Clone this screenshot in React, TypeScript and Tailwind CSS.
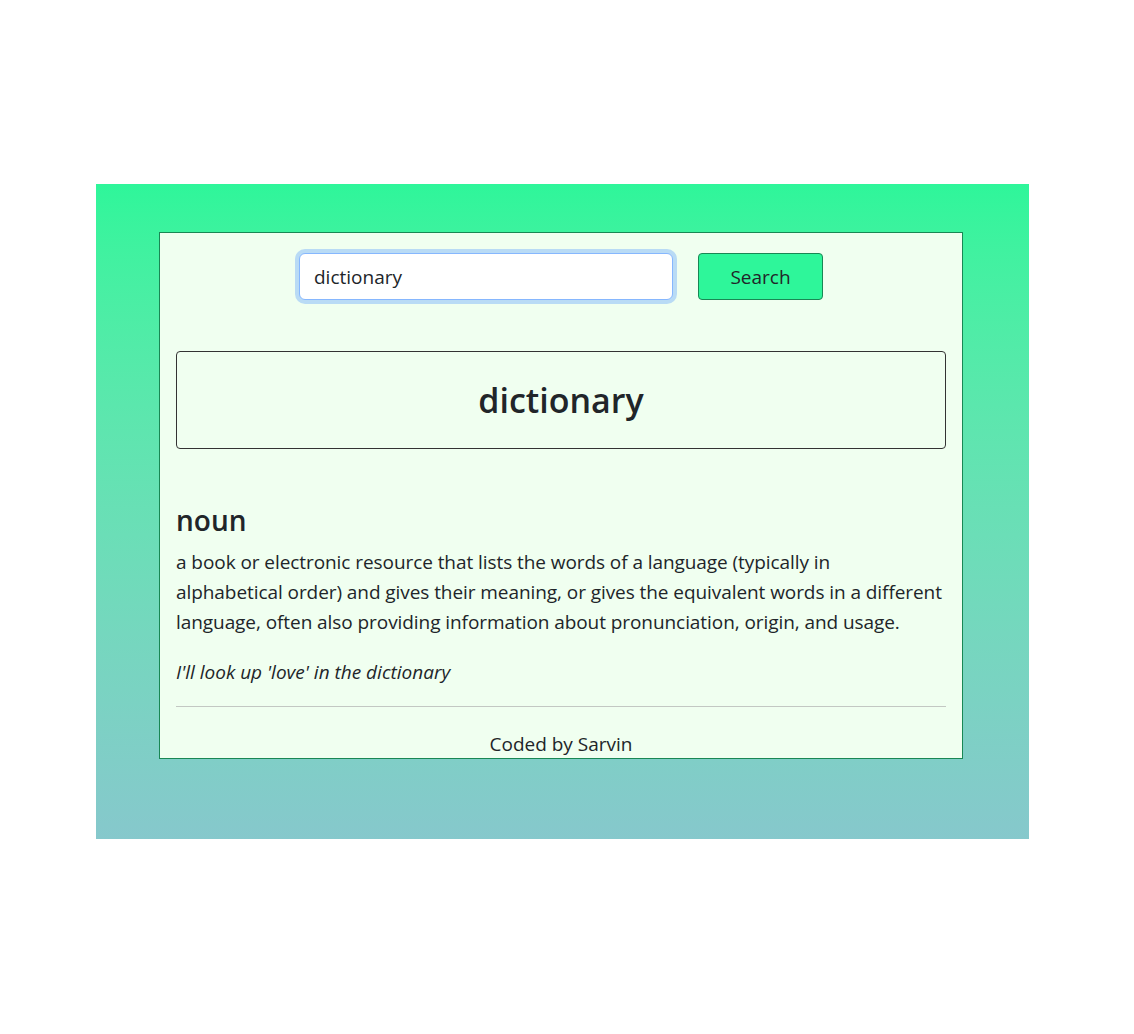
import { useState } from 'react'

export default function App() {
  const [keyword, setKeyword] = useState('dictionary')

  return (
    <div className="min-h-screen bg-white font-['Open_Sans',sans-serif] text-[#212529]">
      <div className="ml-[96px] pt-[184px]">
        <div className="w-[933px] h-[655px] bg-gradient-to-b from-[#2ef69a] to-[#86c8cc] pt-[48px] pl-[63px]">
          {/* Card */}
          <div className="w-[804px] h-[527px] bg-[#f0fff0] border border-[#198754] px-4">
            {/* Search form */}
            <form className="flex justify-center items-center gap-[25px] pt-[20px]" onSubmit={(e) => e.preventDefault()}>
              <input
                type="text"
                value={keyword}
                onChange={(e) => setKeyword(e.target.value)}
                className="w-[374px] h-[47px] bg-white border border-[#86b7fe] rounded-md px-[14px] text-[19px] outline-none shadow-[0_0_0_4px_#b9dbf5]"
              />
              <button className="w-[125px] h-[47px] bg-[#2ef69a] border border-[#198754] rounded text-[19px] text-[#212529] pt-[2px]">
                Search
              </button>
            </form>

            {/* Word */}
            <div className="mt-[51px] h-[98px] border border-[#333] rounded flex items-center justify-center">
              <h1 className="text-[34px] font-semibold leading-none">{keyword}</h1>
            </div>

            {/* Meaning */}
            <div className="mt-[55px]">
              <h2 className="text-[28px] font-semibold leading-[1.2]">noun</h2>
              <p className="mt-[9px] text-[19px] leading-[30px] tracking-[-0.07px]">
                a book or electronic resource that lists the words of a language (typically in
                <br />
                alphabetical order) and gives their meaning, or gives the equivalent words in a different language, often also providing information about pronunciation, origin, and usage.
              </p>
              <p className="mt-[20px] text-[19px] leading-[30px] italic">I'll look up 'love' in the dictionary</p>
            </div>

            <hr className="mt-[19px] border-0 border-t border-[#c3c8c3]" />
            <footer className="text-center text-[19px] mt-[25px] leading-[24px]">Coded by Sarvin</footer>
          </div>
        </div>
      </div>
    </div>
  )
}
